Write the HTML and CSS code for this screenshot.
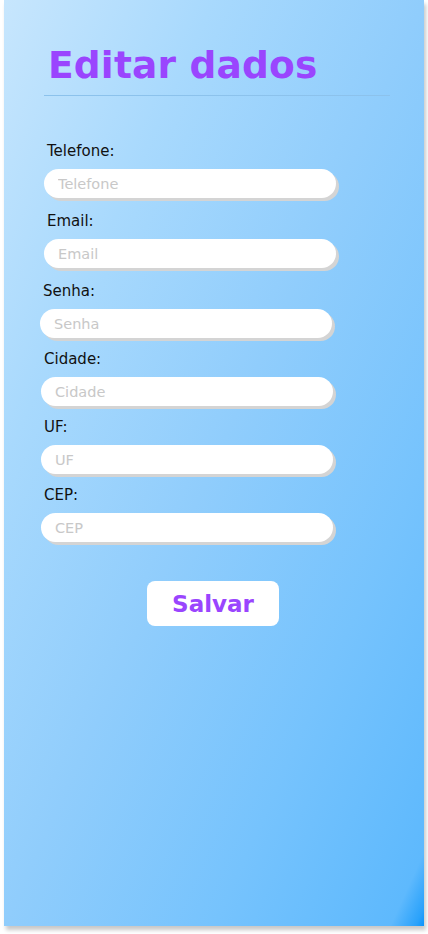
FILE: index.html
```html
<!DOCTYPE html>
<html lang="pt-BR">
<head>
<meta charset="utf-8">
<title>Editar dados</title>
<link rel="stylesheet" href="styles.css">
</head>
<body>
<main class="card">
  <h1 class="title">Editar dados</h1>
  <hr class="divider">
  <form class="form">
    <div class="field field-a">
      <label class="label">Telefone:</label>
      <input class="input" type="text" placeholder="Telefone">
    </div>
    <div class="field field-a">
      <label class="label">Email:</label>
      <input class="input" type="text" placeholder="Email">
    </div>
    <div class="field field-b">
      <label class="label">Senha:</label>
      <input class="input" type="password" placeholder="Senha">
    </div>
    <div class="field field-c">
      <label class="label">Cidade:</label>
      <input class="input" type="text" placeholder="Cidade">
    </div>
    <div class="field field-c">
      <label class="label">UF:</label>
      <input class="input" type="text" placeholder="UF">
    </div>
    <div class="field field-c">
      <label class="label">CEP:</label>
      <input class="input" type="text" placeholder="CEP">
    </div>
    <div class="actions">
      <button class="button" type="button">Salvar</button>
    </div>
  </form>
</main>
</body>
</html>
```
FILE: styles.css
```css
html, body {
  margin: 0;
  padding: 0;
  background: #ffffff;
}
body {
  font-family: "DejaVu Sans", "Open Sans", sans-serif;
  width: 428px;
  height: 934px;
  overflow: hidden;
}
.card {
  box-sizing: border-box;
  margin-left: 4px;
  width: 420px;
  height: 926px;
  padding: 44px 0 0 0;
  background: linear-gradient(to bottom right, #c7e6fd 0%, #a8d9fd 25%, #90cdfc 50%, #76c3fd 75%, #5eb9fd 96%, #2aa2fb 99%, #0a94fb 100%);
  box-shadow: 2px 4px 4px rgba(0, 0, 0, 0.22);
}
.title {
  margin: 0 0 0 44px;
  font-size: 37.5px;
  font-weight: bold;
  line-height: 42px;
  color: #9a45fe;
  letter-spacing: 0.2px;
}
.divider {
  margin: 9px 34px 0 40px;
  border: 0;
  height: 1px;
  background: #8cc2ec;
}
.form {
  display: flex;
  flex-direction: column;
  padding-top: 47px;
}
.field {
  display: flex;
  flex-direction: column;
  height: 70px;
}
.field-b { height: 68px; }
.field-c { height: 68px; }
.label {
  font-size: 15px;
  line-height: 16px;
  color: #111;
  margin-bottom: 10px;
}
.field-a .label { margin-left: 43px; }
.field-b .label { margin-left: 39px; }
.field-c .label { margin-left: 40px; }
.field-a .input { margin-left: 40px; }
.field-b .input { margin-left: 36px; }
.field-c .input { margin-left: 37px; }
.input {
  box-sizing: border-box;
  width: 292px;
  height: 29px;
  border: 0;
  border-radius: 15px;
  background: #ffffff;
  box-shadow: 3px 3px 0 #d4d4d4;
  padding: 0 14px;
  font-family: inherit;
  font-size: 14.5px;
  color: #333;
  outline: none;
}
.input::placeholder {
  color: #c8c8c8;
}
.actions {
  display: flex;
  justify-content: center;
  padding-top: 26px;
}
.button {
  width: 132px;
  height: 45px;
  margin-left: -2px;
  border: 0;
  border-radius: 8px;
  background: #ffffff;
  font-family: inherit;
  font-weight: bold;
  font-size: 23px;
  color: #9a45fe;
}
```
